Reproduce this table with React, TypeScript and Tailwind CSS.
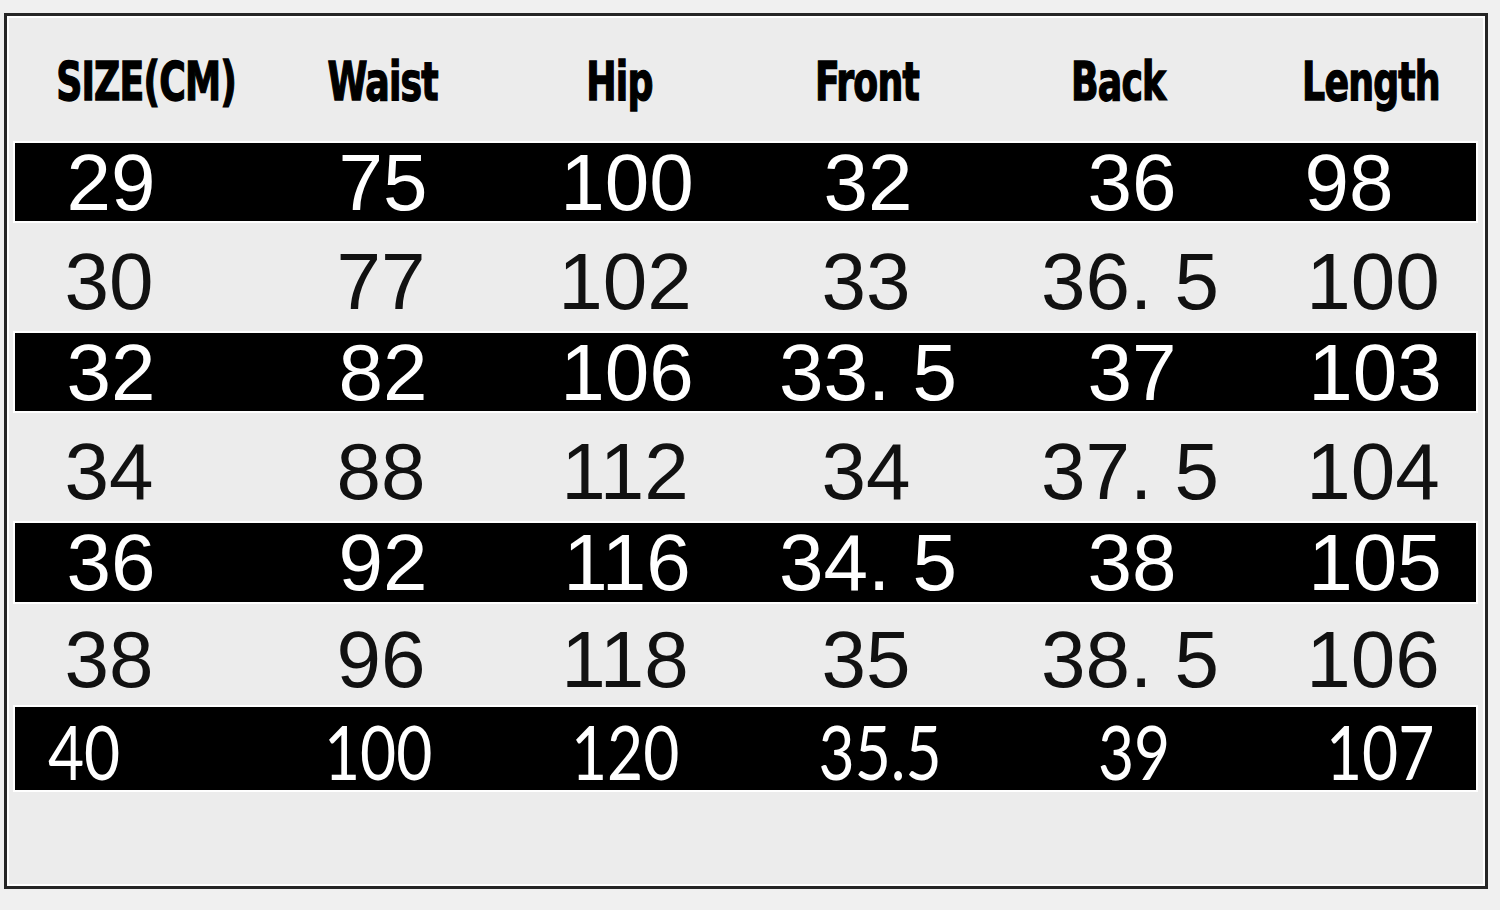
import React from "react";

const headers = ["SIZE(CM)", "Waist", "Hip", "Front", "Back", "Length"];

const rows: string[][] = [
  ["29", "75", "100", "32", "36", "98"],
  ["30", "77", "102", "33", "36. 5", "100"],
  ["32", "82", "106", "33. 5", "37", "103"],
  ["34", "88", "112", "34", "37. 5", "104"],
  ["36", "92", "116", "34. 5", "38", "105"],
  ["38", "96", "118", "35", "38. 5", "106"],
  ["40", "100", "120", "35.5", "39", "107"],
];

// column boxes sized so each centre lands under the picture's columns
const grid = "grid grid-cols-[192px_352px_136px_346px_182px_252px]";
const headPad = ["pl-[74px]", "pl-[4px]", "pr-[12px]", "pl-[2px]", "pr-[24px]", "pl-[48px]"];
const cellPad = ["", "", "", "", "", "pl-[52px]"];
const firstPad = ["", "", "", "", "", ""];
const lastPad = ["pr-[54px]", "pr-[10px]", "pr-[4px]", "pl-[24px]", "pl-[4px]", "pl-[62px]"];

const rowHeights = ["h-[82px]", "h-[108px]", "h-[82px]", "h-[108px]", "h-[83px]", "h-[101px]", "h-[87px]"];

const SizeChart = () => {
  return (
    <div className="w-[1500px] h-[910px] bg-[#f0f0f0] pt-[13px] pl-[4px] overflow-hidden">
      <div className="w-[1484px] h-[876px] border-[3px] border-[#262626]">
        <div className="h-full border-2 border-white bg-[#ececec] pl-[4px] pr-[5px]">
          <div className={`${grid} h-[123px] items-center pt-[2px]`}>
            {headers.map((h, i) => (
              <div key={h} className={`flex justify-center ${headPad[i]}`}>
                <span className="inline-block whitespace-nowrap font-['DejaVu_Sans_Condensed','DejaVu_Sans',sans-serif] font-stretch-condensed font-bold text-[48px] leading-none text-black tracking-[-1px] scale-x-[0.84] scale-y-[1.12] [-webkit-text-stroke:1.2px_black]">
                  {h}
                </span>
              </div>
            ))}
          </div>
          {rows.map((row, r) => {
            const dark = r % 2 === 0;
            const last = r === rows.length - 1;
            const pads = last ? lastPad : r === 0 ? firstPad : cellPad;
            return (
              <div
                key={r}
                className={`${grid} ${rowHeights[r]} items-center ${
                  dark ? "bg-black border-2 border-white text-white" : "text-[#111111]"
                }`}
              >
                {row.map((v, c) => (
                  <div
                    key={c}
                    className={`flex justify-center whitespace-nowrap ${pads[c]} ${
                      last ? "pt-[4px]" : dark ? "pb-[8px]" : "pt-[10px]"
                    }`}
                  >
                    {last ? (
                      <span className="inline-block font-['Lato','DejaVu_Sans',sans-serif] text-[76px] leading-none scale-x-[0.82]">
                        {v}
                      </span>
                    ) : (
                      <span className="font-['Liberation_Sans',Arial,sans-serif] text-[80px] leading-none">
                        {v}
                      </span>
                    )}
                  </div>
                ))}
              </div>
            );
          })}
        </div>
      </div>
    </div>
  );
};

export default function App() {
  return <SizeChart />;
}
